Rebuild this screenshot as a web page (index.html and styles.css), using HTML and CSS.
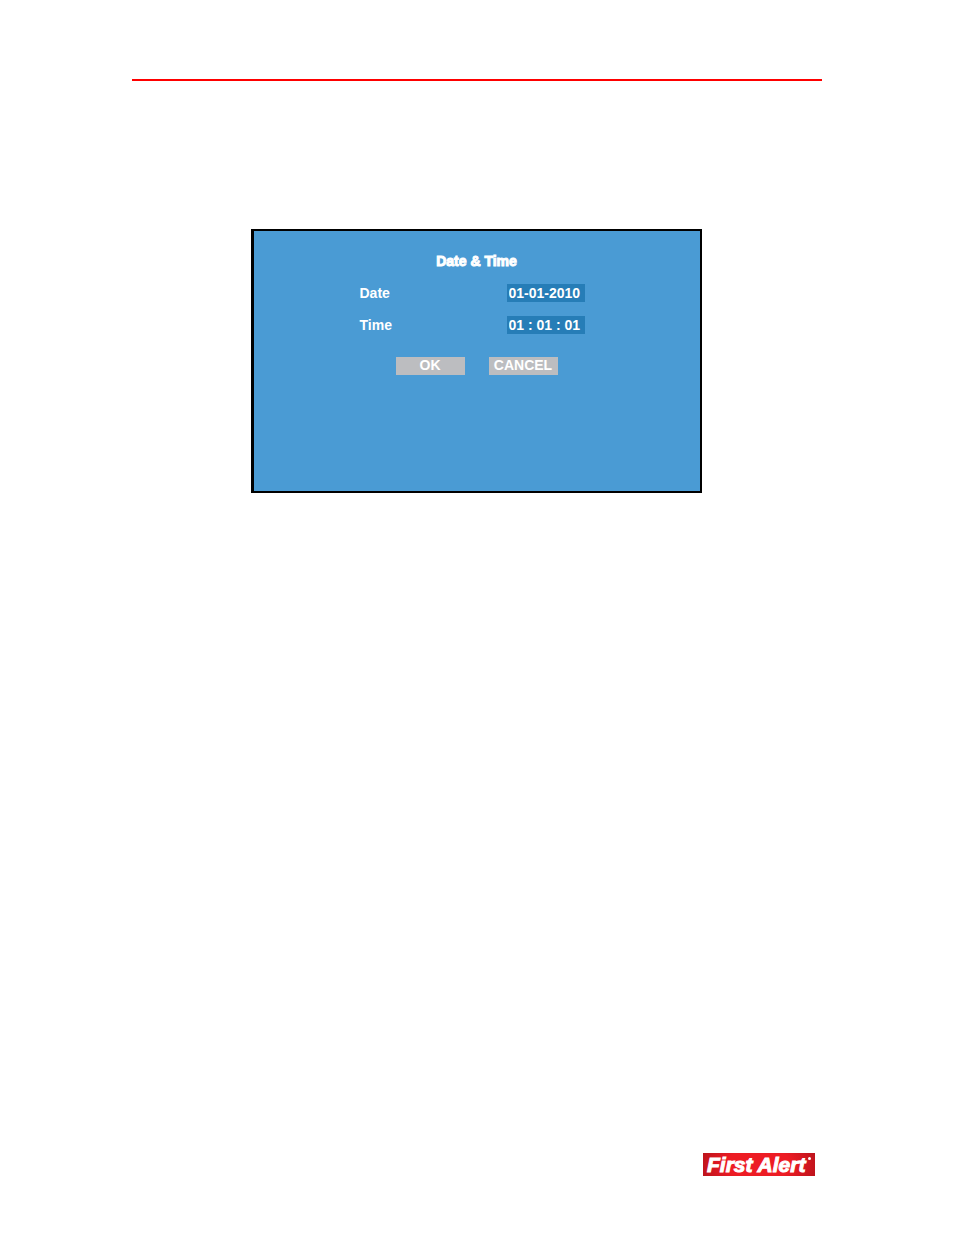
FILE: index.html
```html
<!DOCTYPE html>
<html lang="en">
  <head>
    <meta charset="utf-8">
    <title>Date &amp; Time</title>
    <link rel="stylesheet" href="styles.css">
  </head>
  <body>

    <header class="page-header"></header>

    <main class="page-main">
      <form class="screen">
        <h1 class="screen-title">Date &amp; Time</h1>

        <div class="form-row">
          <label for="date">Date</label>
          <input type="text" name="date" id="date" value="01-01-2010">
        </div>

        <div class="form-row">
          <label for="time">Time</label>
          <input type="text" name="time" id="time" value="01 : 01 : 01">
        </div>

        <div class="button-row">
          <button type="submit">OK</button>
          <button type="button">CANCEL</button>
        </div>
      </form>
    </main>

    <footer class="page-footer">
      <div class="logo">First Alert<span class="logo-dot"></span></div>
    </footer>

  </body>
</html>
```
FILE: styles.css
```css
* {
  box-sizing: border-box;
}

body {
  display: flex;
  flex-direction: column;
  min-height: 100vh;
  margin: 0;
  padding: 79px 132px 59px;
  background-color: #fff;
  font-family: "Liberation Sans", Arial, sans-serif;
}

.page-header {
  border-top: 2px solid #f00;
}

.page-main {
  flex: auto;
  padding: 148px 2px 0 0;
}

.screen {
  width: 451px;
  max-width: 100%;
  min-height: 264px;
  margin: 0 auto;
  padding-top: 21px;
  border: 2px solid #000;
  border-left-width: 3px;
  background-color: #4a9bd4;
  color: #fff;
  font-size: 14px;
  font-weight: bold;
  line-height: 18px;
}

.screen-title {
  margin: 0 0 14px;
  font-size: 14px;
  text-align: center;
  -webkit-text-stroke: 1px #fff;
}

.form-row {
  display: flex;
  justify-content: space-between;
  width: 225px;
  margin: 0 0 14px 106px;
}

.form-row input {
  width: 78px;
  height: 18px;
  padding: 0 2px;
  border: none;
  background-color: #267db7;
  color: #fff;
  font: inherit;
}

.button-row {
  display: flex;
  justify-content: center;
  gap: 24px;
  padding-top: 9px;
}

.button-row button {
  width: 69px;
  height: 18px;
  padding: 0 0 2px;
  border: none;
  background-color: #bcbdc0;
  color: #fff;
  font: inherit;
  line-height: 16px;
  cursor: pointer;
}

.page-footer {
  display: flex;
  justify-content: flex-end;
  padding-right: 7px;
}

.logo {
  position: relative;
  width: 112px;
  height: 23px;
  padding-left: 4px;
  background: radial-gradient(ellipse 64px 32px at center, #ed1c24 50%, #b5121b);
  color: #fff;
  font-size: 21px;
  font-style: italic;
  font-weight: bold;
  line-height: 23px;
  white-space: nowrap;
  -webkit-text-stroke: 1px #fff;
}

/* registered mark after the name */
.logo-dot {
  position: absolute;
  top: 4px;
  right: 4px;
  width: 3px;
  height: 3px;
  border-radius: 50%;
  background-color: #fff;
}
```
